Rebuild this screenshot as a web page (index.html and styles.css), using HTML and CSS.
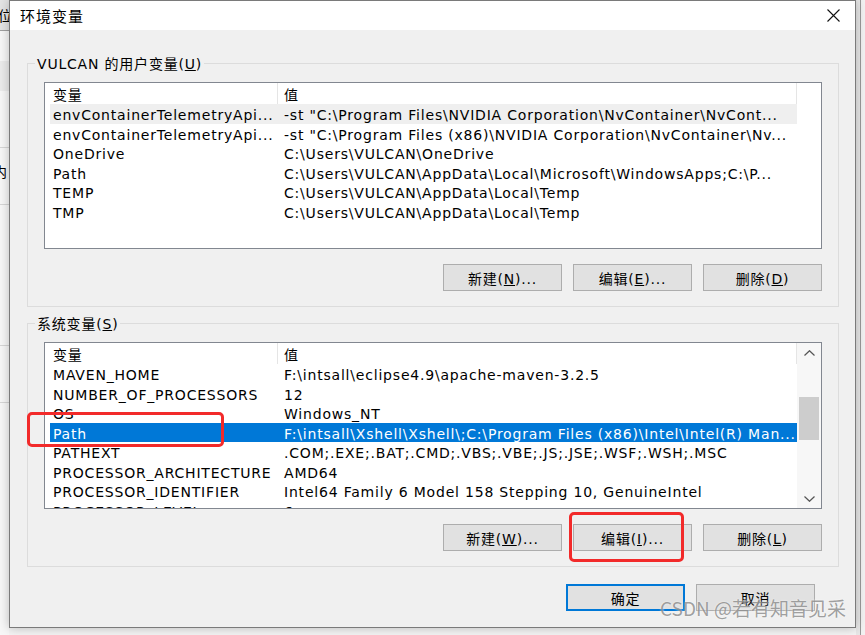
FILE: index.html
```html
<!DOCTYPE html>
<html lang="zh-CN">
<head>
    <meta charset="UTF-8">
    <title>环境变量</title>
    <link rel="stylesheet" href="styles.css">
</head>
<body>
    <div class="screen">
        <div class="behind-left">
            <div class="bl-top"><span>位</span></div>
            <div class="bl-band"></div>
            <div class="bl-row"></div>
            <div class="bl-row bl-text"><span>内</span></div>
            <div class="bl-row bl-tall"></div>
            <div class="bl-row"></div>
        </div>

        <div class="dialog">
            <div class="titlebar">
                <span class="title">环境变量</span>
                <svg class="close" width="13" height="13" viewBox="0 0 13 13">
                    <path d="M0.5 0.5 L12.5 12.5 M12.5 0.5 L0.5 12.5" stroke="#111" stroke-width="1.1" fill="none"/>
                </svg>
            </div>

            <div class="dialog-body">
                <fieldset class="group">
                    <legend>VULCAN 的用户变量(<u>U</u>)</legend>
                    <div class="list">
                        <div class="table">
                            <div class="row head"><span class="c1">变量</span><span class="c2">值</span></div>
                            <div class="row hover"><span class="c1">envContainerTelemetryApi...</span><span class="c2">-st "C:\Program Files\NVIDIA Corporation\NvContainer\NvCont...</span></div>
                            <div class="row"><span class="c1">envContainerTelemetryApi...</span><span class="c2">-st "C:\Program Files (x86)\NVIDIA Corporation\NvContainer\Nv...</span></div>
                            <div class="row"><span class="c1">OneDrive</span><span class="c2">C:\Users\VULCAN\OneDrive</span></div>
                            <div class="row"><span class="c1">Path</span><span class="c2">C:\Users\VULCAN\AppData\Local\Microsoft\WindowsApps;C:\P...</span></div>
                            <div class="row"><span class="c1">TEMP</span><span class="c2">C:\Users\VULCAN\AppData\Local\Temp</span></div>
                            <div class="row"><span class="c1">TMP</span><span class="c2">C:\Users\VULCAN\AppData\Local\Temp</span></div>
                        </div>
                    </div>
                    <div class="group-buttons">
                        <button class="btn">新建(<u>N</u>)...</button>
                        <button class="btn">编辑(<u>E</u>)...</button>
                        <button class="btn">删除(<u>D</u>)</button>
                    </div>
                </fieldset>

                <fieldset class="group group-system">
                    <legend>系统变量(<u>S</u>)</legend>
                    <div class="list">
                        <div class="table">
                            <div class="row head"><span class="c1">变量</span><span class="c2">值</span></div>
                            <div class="row"><span class="c1">MAVEN_HOME</span><span class="c2">F:\intsall\eclipse4.9\apache-maven-3.2.5</span></div>
                            <div class="row"><span class="c1">NUMBER_OF_PROCESSORS</span><span class="c2">12</span></div>
                            <div class="row"><span class="c1">OS</span><span class="c2">Windows_NT</span></div>
                            <div class="row selected"><span class="c1">Path</span><span class="c2">F:\intsall\Xshell\Xshell\;C:\Program Files (x86)\Intel\Intel(R) Man...</span></div>
                            <div class="row"><span class="c1">PATHEXT</span><span class="c2">.COM;.EXE;.BAT;.CMD;.VBS;.VBE;.JS;.JSE;.WSF;.WSH;.MSC</span></div>
                            <div class="row"><span class="c1">PROCESSOR_ARCHITECTURE</span><span class="c2">AMD64</span></div>
                            <div class="row"><span class="c1">PROCESSOR_IDENTIFIER</span><span class="c2">Intel64 Family 6 Model 158 Stepping 10, GenuineIntel</span></div>
                            <div class="row"><span class="c1">PROCESSOR_LEVEL</span><span class="c2">6</span></div>
                        </div>
                        <div class="scrollbar">
                            <svg class="arrow" width="11" height="6" viewBox="0 0 11 6">
                                <path d="M0.5 5.5 L5.5 0.7 L10.5 5.5" stroke="#555" stroke-width="1.2" fill="none"/>
                            </svg>
                            <div class="track"><div class="thumb"></div></div>
                            <svg class="arrow" width="11" height="6" viewBox="0 0 11 6">
                                <path d="M0.5 0.5 L5.5 5.3 L10.5 0.5" stroke="#555" stroke-width="1.2" fill="none"/>
                            </svg>
                        </div>
                    </div>
                    <div class="group-buttons">
                        <button class="btn">新建(<u>W</u>)...</button>
                        <button class="btn">编辑(<u>I</u>)...</button>
                        <button class="btn">删除(<u>L</u>)</button>
                    </div>
                </fieldset>

                <div class="actions">
                    <button class="btn btn-default">确定</button>
                    <button class="btn">取消</button>
                </div>
            </div>
        </div>

        <div class="behind-right"></div>

        <!-- red annotation boxes drawn over the screenshot -->
        <div class="mark mark-path"></div>
        <div class="mark mark-edit"></div>
        <div class="watermark">CSDN @若有知音见采</div>
    </div>
</body>
</html>
```

FILE: styles.css
```css
body {
    margin: 0;
    padding: 0;
    background: #f4f4f4;
    font-family: "DejaVu Sans", "Noto Sans CJK SC", sans-serif;
    font-size: 14px;
    letter-spacing: 0.8px;
    color: #000;
    overflow: hidden;
}

.screen {
    position: relative;
    display: flex;
    width: 865px;
    height: 635px;
    overflow: hidden;
}

/* window behind the dialog */
.behind-left {
    width: 9px;
    flex-shrink: 0;
    background: #f7f7f7;
    display: flex;
    flex-direction: column;
}

.bl-top {
    height: 30px;
    background: #e4e4e4;
    border-bottom: 1px solid #a0a0a0;
    overflow: hidden;
    line-height: 30px;
}

.bl-top span,
.bl-text span {
    display: block;
    font-family: "Noto Sans CJK SC", sans-serif;
    font-size: 14px;
    margin-left: -2px;
}

.bl-band {
    height: 30px;
    margin-top: 30px;
    background: #ebebeb;
}

.bl-row {
    height: 56px;
    border-bottom: 1px solid #d6d6d6;
    overflow: hidden;
}

.bl-text span {
    margin-left: -7px;
    margin-top: 13px;
}

.bl-tall {
    height: 140px;
}

.behind-right {
    flex: 1;
    background: #f2f2f2;
    border-left: 4px solid #e8e8e8;
    box-shadow: inset 1px 0 0 #9a9a9a;
}

/* dialog */
.dialog {
    width: 847px;
    height: 628px;
    flex-shrink: 0;
    box-sizing: border-box;
    border: 1px solid #7a7a7a;
    background: #f0f0f0;
    box-shadow: 0 0 10px rgba(0, 0, 0, 0.25);
    display: flex;
    flex-direction: column;
    z-index: 1;
}

.titlebar {
    height: 29px;
    background: #fff;
    display: flex;
    align-items: center;
    justify-content: space-between;
    padding: 0 15px 0 10px;
}

.title {
    font-family: "Noto Sans CJK SC", sans-serif;
    font-size: 15px;
    letter-spacing: 1px;
}

.dialog-body {
    padding: 24px 16px 0 17px;
}

.group {
    margin: 0;
    padding: 10px 16px 15px 16px;
    border: 1px solid #dcdcdc;
    min-width: 0;
}

.group-system {
    margin-top: 7px;
}

.group legend {
    padding: 0 2px;
    margin-left: -9px;
    line-height: 20px;
    height: 18px;
}

.list {
    height: 167px;
    box-sizing: border-box;
    border: 1px solid #828790;
    background: #fff;
    display: flex;
    overflow: hidden;
}

.table {
    width: 747px;
    margin-left: 5px;
    flex-shrink: 0;
    overflow: hidden;
}

.row {
    display: flex;
    height: 19.5px;
    line-height: 22px;
    white-space: nowrap;
}

.row.head {
    height: 21px;
    line-height: 24px;
}

.row.head .c1 {
    border-right: 1px solid #e5e5e5;
}

.row.head .c2 {
    border-right: 1px solid #e5e5e5;
}

.row.hover {
    background: #efefef;
}

.row.selected {
    background: #0078d7;
    color: #fff;
}

.c1 {
    width: 228px;
    box-sizing: border-box;
    padding-left: 3px;
    flex-shrink: 0;
    overflow: hidden;
}

.c2 {
    flex: 1;
    padding-left: 6px;
    overflow: hidden;
}

.scrollbar {
    flex: 1;
    background: #f7f7f7;
    display: flex;
    flex-direction: column;
    align-items: center;
    padding: 7px 0 6px;
}

.track {
    flex: 1;
    width: 20px;
}

.thumb {
    margin-top: 41px;
    height: 43px;
    background: #cdcdcd;
}

.group-buttons {
    display: flex;
    justify-content: flex-end;
    gap: 11px;
    margin-top: 15px;
}

.btn {
    width: 119px;
    height: 27px;
    box-sizing: border-box;
    padding: 0;
    border: 1px solid #adadad;
    background: #e1e1e1;
    font-family: "DejaVu Sans", "Noto Sans CJK SC", sans-serif;
    font-size: 14px;
    letter-spacing: 0.8px;
    color: #000;
}

.btn-default {
    border: 2px solid #0078d7;
}

.actions {
    display: flex;
    justify-content: flex-end;
    gap: 11px;
    margin: 17px 24px 0 0;
}

/* annotation overlays */
.mark {
    position: absolute;
    border: 3px solid #f22a2a;
    border-radius: 5px;
    z-index: 2;
}

.mark-path {
    left: 27px;
    top: 412px;
    width: 191px;
    height: 29px;
}

.mark-edit {
    left: 569px;
    top: 512px;
    width: 109px;
    height: 44px;
}

.watermark {
    position: absolute;
    left: 660px;
    top: 594px;
    z-index: 2;
    font-family: "Noto Sans CJK SC", sans-serif;
    font-size: 19px;
    letter-spacing: 0;
    color: rgba(120, 120, 120, 0.7);
    text-shadow: 0 0 2px rgba(255, 255, 255, 0.8);
}
```
